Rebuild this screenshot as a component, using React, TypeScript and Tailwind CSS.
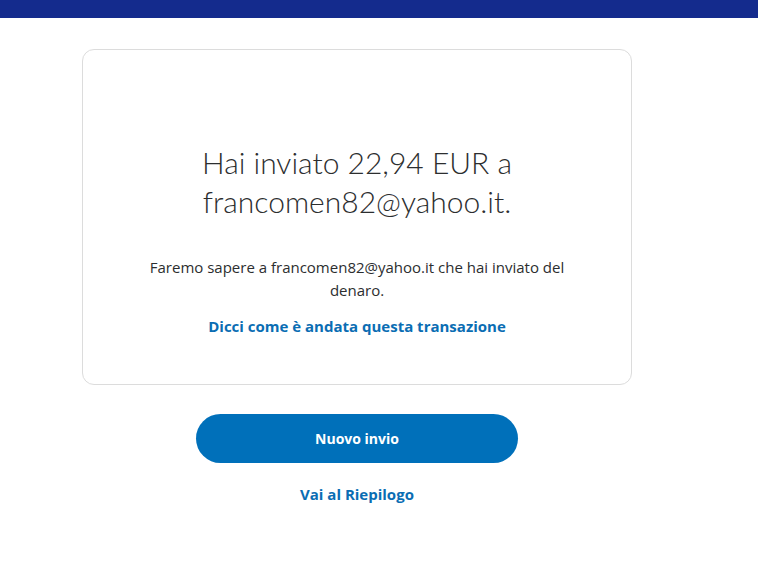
const App = () => {
  return (
    <div className="min-h-[579px] w-[758px] bg-white font-['Open_Sans','Lato',sans-serif]">
      <div className="h-[18px] w-full bg-[#142b8d]" />

      <div className="ml-[82px] w-[550px] pt-[31px]">
        <div className="flex flex-col items-center rounded-[12px] border border-[#dcdcdc] px-[40px] pt-[93px] pb-[47px] text-center">
          <h1 className="font-['Lato',sans-serif] text-[30px] leading-[39px] font-light text-[#2c2e2f]">
            Hai inviato 22,94 EUR a
            <br />
            francomen82@yahoo.it.
          </h1>
          <p className="mt-[35px] w-[440px] text-[15px] leading-[23px] text-[#2c2e2f]">
            Faremo sapere a francomen82@yahoo.it che hai inviato del denaro.
          </p>
          <a className="mt-[13px] text-[15px] leading-[22px] font-bold text-[#0a6db3]">
            Dicci come è andata questa transazione
          </a>
        </div>

        <div className="mt-[29px] flex flex-col items-center">
          <button
            type="button"
            className="h-[49px] w-[322px] rounded-full bg-[#0070ba] text-[14px] font-bold text-white"
          >
            Nuovo invio
          </button>
          <a className="mt-[20px] text-[15px] leading-[22px] font-bold text-[#0a6db3]">
            Vai al Riepilogo
          </a>
        </div>
      </div>
    </div>
  );
};

export default App;
